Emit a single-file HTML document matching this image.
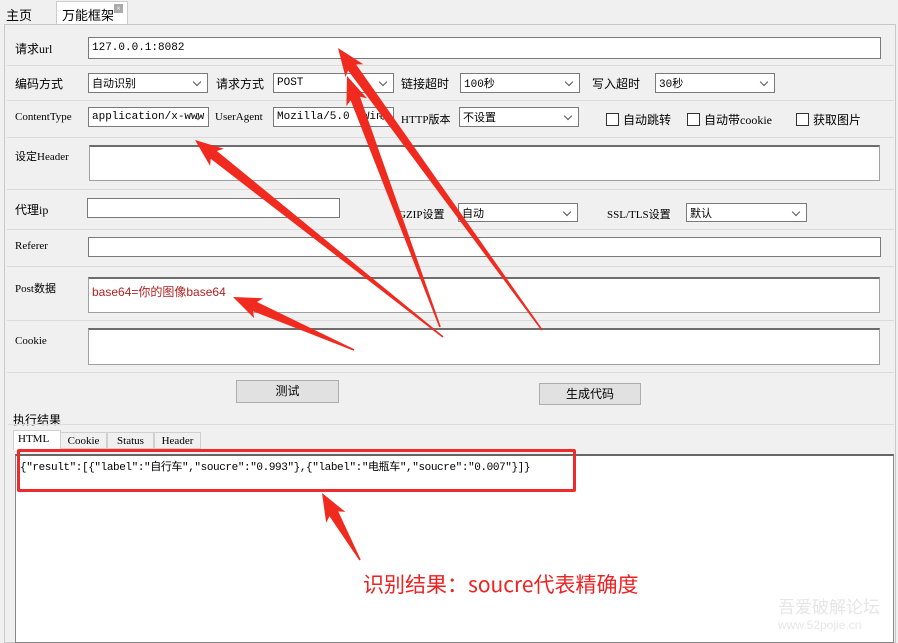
<!DOCTYPE html>
<html><head><meta charset="utf-8"><style>
body{margin:0;width:898px;height:643px;overflow:hidden;background:#f0f0f0;font-family:"Liberation Serif","Noto Sans CJK SC",serif;font-size:12px;color:#000;position:relative}
.a{position:absolute}
.lbl{position:absolute;font-size:12px;white-space:nowrap}
.in{position:absolute;background:#fff;border:1px solid #7a7a7a;box-sizing:border-box;font-size:11px;padding:0 3px;display:flex;align-items:center;white-space:nowrap;overflow:hidden;font-family:"Liberation Mono","Noto Sans CJK SC",monospace}
.sel::after{content:"";position:absolute;right:7px;top:5px;width:5px;height:5px;border-right:1px solid #555;border-bottom:1px solid #555;transform:rotate(45deg)}
.ta{position:absolute;background:#fff;border:1px solid #a0a0a0;border-top:2px solid #6d6d6d;box-sizing:border-box}
.hl{position:absolute;left:7px;right:4px;height:1px;background:#dadada}
.cb{position:absolute;width:11px;height:11px;border:1px solid #333;background:#fff}
.btn{position:absolute;background:#e1e1e1;border:1px solid #adadad;box-sizing:border-box;text-align:center;font-size:12px}
.tab{position:absolute;top:432px;height:17px;border:1px solid #d0d0d0;background:#f0f0f0;font-size:11px;text-align:center;line-height:17px;box-sizing:border-box}
</style></head><body>
<div class="a" style="left:0;top:0;width:898px;height:24px;background:#f0f0f0"></div>
<div class="lbl" style="left:6px;top:5px;font-size:13px">主页</div>
<div class="a" style="left:56px;top:1px;width:70px;height:23px;background:#fff;border:1px solid #ccc;border-bottom:none"></div>
<div class="lbl" style="left:62px;top:5px;font-size:13px">万能框架</div>
<div class="a" style="left:114px;top:4px;width:9px;height:9px;background:#aaa;color:#fff;font-size:8px;line-height:9px;text-align:center">×</div>
<div class="a" style="left:4px;top:24px;width:892px;height:619px;border:1px solid #c8c8c8;box-sizing:border-box"></div>

<div class="lbl" style="left:15px;top:40px">请求url</div>
<div class="in" style="left:88px;top:37px;width:793px;height:22px">127.0.0.1:8082</div>
<div class="hl" style="top:65px"></div>

<div class="lbl" style="left:15px;top:75px">编码方式</div>
<div class="in sel" style="left:88px;top:73px;width:120px;height:20px;font-family:'Noto Sans CJK SC',sans-serif">自动识别</div>
<div class="lbl" style="left:216px;top:75px">请求方式</div>
<div class="in sel" style="left:273px;top:73px;width:121px;height:20px">POST</div>
<div class="lbl" style="left:401px;top:75px">链接超时</div>
<div class="in sel" style="left:460px;top:73px;width:120px;height:20px">100秒</div>
<div class="lbl" style="left:592px;top:75px">写入超时</div>
<div class="in sel" style="left:655px;top:73px;width:120px;height:20px">30秒</div>
<div class="hl" style="top:100px"></div>

<div class="lbl" style="left:15px;top:111px;font-size:11px">ContentType</div>
<div class="in sel" style="left:88px;top:107px;width:121px;height:20px">application/x-www</div>
<div class="lbl" style="left:215px;top:111px;font-size:11px">UserAgent</div>
<div class="in sel" style="left:273px;top:107px;width:121px;height:20px">Mozilla/5.0 (Win</div>
<div class="lbl" style="left:401px;top:111px;font-size:11px">HTTP版本</div>
<div class="in sel" style="left:459px;top:107px;width:120px;height:20px;font-family:'Noto Sans CJK SC',sans-serif">不设置</div>
<div class="cb" style="left:606px;top:113px"></div><div class="lbl" style="left:623px;top:111px">自动跳转</div>
<div class="cb" style="left:687px;top:113px"></div><div class="lbl" style="left:704px;top:111px">自动带cookie</div>
<div class="cb" style="left:796px;top:113px"></div><div class="lbl" style="left:813px;top:111px">获取图片</div>
<div class="hl" style="top:137px"></div>

<div class="lbl" style="left:15px;top:148px;font-size:11px">设定Header</div>
<div class="ta" style="left:89px;top:145px;width:791px;height:36px"></div>
<div class="hl" style="top:189px"></div>

<div class="lbl" style="left:15px;top:201px">代理ip</div>
<div class="in" style="left:87px;top:198px;width:253px;height:20px"></div>
<div class="lbl" style="left:398px;top:206px;font-size:11px">GZIP设置</div>
<div class="in sel" style="left:458px;top:203px;width:120px;height:19px;font-family:'Noto Sans CJK SC',sans-serif">自动</div>
<div class="lbl" style="left:607px;top:206px;font-size:11px">SSL/TLS设置</div>
<div class="in sel" style="left:686px;top:203px;width:121px;height:19px;font-family:'Noto Sans CJK SC',sans-serif">默认</div>
<div class="hl" style="top:229px"></div>

<div class="lbl" style="left:15px;top:240px;font-size:11px">Referer</div>
<div class="in" style="left:88px;top:237px;width:793px;height:20px"></div>
<div class="hl" style="top:266px"></div>

<div class="lbl" style="left:15px;top:280px;font-size:11px">Post数据</div>
<div class="ta" style="left:88px;top:277px;width:792px;height:36px"></div>
<div class="lbl" style="left:92px;top:283px;color:#b22222;font-family:'Liberation Sans','Noto Sans CJK SC',sans-serif">base64=你的图像base64</div>
<div class="hl" style="top:320px"></div>

<div class="lbl" style="left:15px;top:335px;font-size:11px">Cookie</div>
<div class="ta" style="left:88px;top:328px;width:792px;height:37px"></div>
<div class="hl" style="top:372px"></div>

<div class="btn" style="left:236px;top:380px;width:103px;height:23px;line-height:21px">测试</div>
<div class="btn" style="left:539px;top:383px;width:102px;height:22px;line-height:20px">生成代码</div>

<div class="lbl" style="left:13px;top:411px;font-family:'Noto Sans CJK SC',sans-serif">执行结果</div>
<div class="a" style="left:8px;top:424px;width:886px;height:1px;background:#ddd"></div>
<div class="tab" style="left:13px;top:430px;width:48px;height:20px;background:#fff;border-bottom:none;text-align:left;padding-left:4px">HTML</div>
<div class="tab" style="left:60px;width:47px">Cookie</div>
<div class="tab" style="left:107px;width:47px">Status</div>
<div class="tab" style="left:154px;width:47px">Header</div>
<div class="a" style="left:15px;top:454px;width:879px;height:189px;background:#fff;border:1px solid #888;border-top:2px solid #666;box-sizing:border-box"></div>
<div class="lbl" style="left:20px;top:458px;font-size:11px;font-family:'Liberation Mono','Noto Sans CJK SC',monospace;letter-spacing:-0.4px">{"result":[{"label":"自行车","soucre":"0.993"},{"label":"电瓶车","soucre":"0.007"}]}</div>
<div class="a" style="left:17px;top:449px;width:559px;height:43px;border:3px solid #ee2a2a;box-sizing:border-box;border-radius:2px"></div>
<div class="lbl" style="left:363px;top:569px;font-size:21px;color:#ee2222;font-family:'Noto Sans CJK SC',sans-serif">识别结果：soucre代表精确度</div>
<div class="lbl" style="left:778px;top:593px;font-size:17px;color:#e6e6e6;font-family:'Noto Sans CJK SC',sans-serif">吾爱破解论坛</div>
<div class="lbl" style="left:778px;top:618px;font-size:12px;color:#e6e6e6;font-family:'Liberation Sans',sans-serif">www.52pojie.cn</div>

<svg class="a" style="left:0;top:0" width="898" height="643" id="sv"></svg>
<script>
var arrows=[[542,330,338,48],[440,327,347,76],[443,337,195,140],[354,350,233,297],[360,560,322,493]];
var s="";
arrows.forEach(function(a){
 var tx=a[0],ty=a[1],hx=a[2],hy=a[3];
 var dx=hx-tx,dy=hy-ty,L=Math.hypot(dx,dy),ux=dx/L,uy=dy/L,px=-uy,py=ux;
 var hl=24,bx=hx-ux*hl,by=hy-uy*hl,w=5,hw=11;
 var pts=[[tx+px*0.8,ty+py*0.8],[bx+px*w,by+py*w],[bx+px*hw-ux*4,by+py*hw-uy*4],[hx,hy],[bx-px*hw-ux*4,by-py*hw-uy*4],[bx-px*w,by-py*w],[tx-px*0.8,ty-py*0.8]];
 s+='<polygon fill="#f02a1e" points="'+pts.map(function(p){return p[0].toFixed(1)+","+p[1].toFixed(1)}).join(" ")+'"/>';
});
document.getElementById("sv").innerHTML=s;
</script>
</body></html>
